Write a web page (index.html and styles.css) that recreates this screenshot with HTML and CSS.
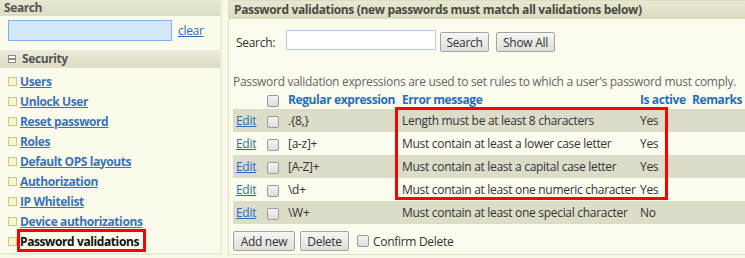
FILE: index.html
```html
<!DOCTYPE html>
<html lang="en">
<head>
  <meta charset="UTF-8">
  <title>Password validations</title>
  <link rel="stylesheet" href="styles.css">
</head>
<body>

  <div class="side">
    <div class="side-head">Search</div>
    <div class="side-search">
      <input type="text" class="side-input">
      <a href="#" class="clear-link">clear</a>
    </div>
    <div class="group-head"><span class="minus-box"></span>Security</div>
    <ul class="nav">
      <li><span class="nav-box"></span><a href="#">Users</a></li>
      <li><span class="nav-box"></span><a href="#">Unlock User</a></li>
      <li><span class="nav-box"></span><a href="#">Reset password</a></li>
      <li><span class="nav-box"></span><a href="#">Roles</a></li>
      <li><span class="nav-box"></span><a href="#">Default OPS layouts</a></li>
      <li><span class="nav-box"></span><a href="#">Authorization</a></li>
      <li><span class="nav-box"></span><a href="#">IP Whitelist</a></li>
      <li><span class="nav-box"></span><a href="#">Device authorizations</a></li>
      <li class="current"><span class="nav-box"></span><span class="current-text">Password validations</span></li>
    </ul>
  </div>

  <div class="main">
    <div class="panel-head">Password validations (new passwords must match all validations below)</div>

    <div class="search-row">
      <label for="q">Search:</label>
      <input type="text" id="q" class="search-input">
      <button class="btn btn-search">Search</button>
      <button class="btn btn-all">Show All</button>
    </div>

    <p class="desc">Password validation expressions are used to set rules to which a user's password must comply.</p>

    <table class="grid">
      <thead>
        <tr>
          <th class="c-edit"></th>
          <th class="c-chk"><span class="chk"></span></th>
          <th class="c-re">Regular expression</th>
          <th class="c-msg">Error message</th>
          <th class="c-act">Is active</th>
          <th class="c-rem">Remarks</th>
        </tr>
      </thead>
      <tbody>
        <tr class="dark">
          <td><a href="#">Edit</a></td>
          <td><span class="chk"></span></td>
          <td>.{8,}</td>
          <td>Length must be at least 8 characters</td>
          <td>Yes</td>
          <td></td>
        </tr>
        <tr>
          <td><a href="#">Edit</a></td>
          <td><span class="chk"></span></td>
          <td>[a-z]+</td>
          <td>Must contain at least a lower case letter</td>
          <td>Yes</td>
          <td></td>
        </tr>
        <tr class="dark">
          <td><a href="#">Edit</a></td>
          <td><span class="chk"></span></td>
          <td>[A-Z]+</td>
          <td>Must contain at least a capital case letter</td>
          <td>Yes</td>
          <td></td>
        </tr>
        <tr>
          <td><a href="#">Edit</a></td>
          <td><span class="chk"></span></td>
          <td>\d+</td>
          <td>Must contain at least one numeric character</td>
          <td>Yes</td>
          <td></td>
        </tr>
        <tr class="dark">
          <td><a href="#">Edit</a></td>
          <td><span class="chk"></span></td>
          <td>\W+</td>
          <td>Must contain at least one special character</td>
          <td>No</td>
          <td></td>
        </tr>
      </tbody>
    </table>

    <div class="actions">
      <button class="btn btn-add">Add new</button>
      <button class="btn btn-del">Delete</button>
      <span class="chk"></span>
      <span class="confirm">Confirm Delete</span>
    </div>
  </div>

  <!-- annotation boxes -->
  <div class="mark mark-nav"></div>
  <div class="mark mark-table"></div>

</body>
</html>
```

FILE: styles.css
```css
body {
  margin: 0;
  height: 258px;
  display: flex;
  gap: 6px;
  background-color: #f9f9e8;
  font-family: "Open Sans", Arial, sans-serif;
  font-size: 12px;
  letter-spacing: -0.3px;
  color: #333;
  overflow: hidden;
}

/* left navigation */
.side {
  flex-shrink: 0;
  width: 220px;
  height: 253px;
  background-color: #fbfbec;
  border-right: 2px solid #ecebd6;
  border-bottom: 2px solid #ecebd6;
}
.side-head {
  height: 16px;
  line-height: 15px;
  padding-left: 4px;
  font-weight: bold;
  font-size: 12px;
  letter-spacing: -0.4px;
  color: #555;
  background: linear-gradient(#e9e8d3, #dddcc4);
}
.side-search {
  display: flex;
  align-items: center;
  padding: 4px 0 6px 8px;
  height: 21px;
}
.side-input {
  flex-shrink: 0;
  width: 164px;
  height: 21px;
  box-sizing: border-box;
  border: 1px solid #7fb3e8;
  background-color: #d4e7f7;
  margin: 0;
}
.clear-link {
  margin-left: 6px;
  color: #1f6fbf;
}
.group-head {
  margin-top: 3px;
  height: 18px;
  line-height: 18px;
  display: flex;
  align-items: center;
  padding-left: 8px;
  font-weight: bold;
  letter-spacing: -0.4px;
  color: #555;
  background: linear-gradient(#eceada, #dedcc4);
}
.minus-box {
  width: 6px;
  height: 6px;
  border: 1px solid #8a8a80;
  background: linear-gradient(#fff 2px, #8a8a80 2px, #8a8a80 4px, #fff 4px);
  margin-right: 6px;
}
.nav {
  list-style: none;
  margin: 3px 0 0;
  padding: 0 0 0 8px;
}
.nav li {
  height: 20px;
  display: flex;
  align-items: center;
}
.nav-box {
  width: 7px;
  height: 7px;
  border: 1px solid #c9c59a;
  background-color: #faf6c8;
  margin-right: 3px;
}
.nav a {
  color: #3a72b6;
  font-weight: bold;
  letter-spacing: -0.4px;
}
.current-text {
  font-weight: bold;
  letter-spacing: -0.4px;
  color: #111;
}

/* main panel */
.main {
  flex: 1;
  min-width: 0;
  height: 253px;
  border: 1px solid #dddcc4;
  border-right: none;
  background-color: #fcfcee;
  overflow: hidden;
}
.panel-head {
  height: 18px;
  line-height: 18px;
  padding-left: 5px;
  font-weight: bold;
  letter-spacing: -0.35px;
  color: #4a4a40;
  background: linear-gradient(#e8e7d0, #dcdbc2);
  white-space: nowrap;
}
.search-row {
  display: flex;
  align-items: center;
  margin-top: 12px;
  padding-left: 7px;
  height: 22px;
}
.search-row label {
  width: 50px;
  flex-shrink: 0;
  color: #333;
}
.search-input {
  flex-shrink: 0;
  width: 150px;
  height: 20px;
  box-sizing: border-box;
  border: 1px solid #aecbea;
  background-color: #fff;
  margin: 0 4px 0 0;
  position: relative;
  top: -2px;
}
.btn {
  font-family: inherit;
  font-size: 12px;
  letter-spacing: inherit;
  color: #333;
  height: 20px;
  padding: 0;
  margin: 0 7px 0 0;
  border: 1px solid #a5a5a0;
  border-radius: 2px;
  background: linear-gradient(#f6f6f6, #dededa);
  cursor: pointer;
  flex-shrink: 0;
}
.btn-search { width: 49px; }
.btn-all { width: 59px; }
.btn-add { width: 62px; }
.btn-del { width: 49px; }
.desc {
  margin: 20px 0 0 4px;
  color: #666;
  white-space: nowrap;
}

.grid {
  margin-left: 4px;
  border-collapse: collapse;
  width: 513px;
}
.grid th {
  height: 19px;
  text-align: left;
  font-weight: bold;
  letter-spacing: -0.4px;
  color: #1e6ec4;
  padding: 0 0 0 3px;
  white-space: nowrap;
}
.grid td {
  height: 23px;
  padding: 0 0 0 3px;
  white-space: nowrap;
  color: #333;
}
.grid tr.dark td {
  background-color: #dcdcc9;
}
.grid td a {
  color: #1f6fbf;
}
.c-edit { width: 26px; }
.c-chk { width: 20px; }
.c-re { width: 111px; }
.c-msg { width: 235px; }
.c-act { width: 49px; }
.chk {
  display: inline-block;
  width: 10px;
  height: 10px;
  border: 1px solid #999;
  border-radius: 2px;
  background: linear-gradient(#f4f4f4, #dcdcdc);
  vertical-align: middle;
}
.grid .chk {
  margin-left: 2px;
}

.actions {
  display: flex;
  align-items: center;
  margin: 7px 0 0 4px;
  height: 20px;
}
.actions .btn {
  margin-right: 5px;
}
.actions .chk {
  margin: 0 4px 0 3px;
}
.confirm {
  color: #333;
}

/* red annotation frames over the screenshot */
.mark {
  position: absolute;
  border: 3px solid #ff0000;
  box-sizing: border-box;
}
.mark-nav {
  left: 17px;
  top: 229px;
  width: 129px;
  height: 23px;
}
.mark-table {
  left: 395px;
  top: 107px;
  width: 273px;
  height: 93px;
}
```
